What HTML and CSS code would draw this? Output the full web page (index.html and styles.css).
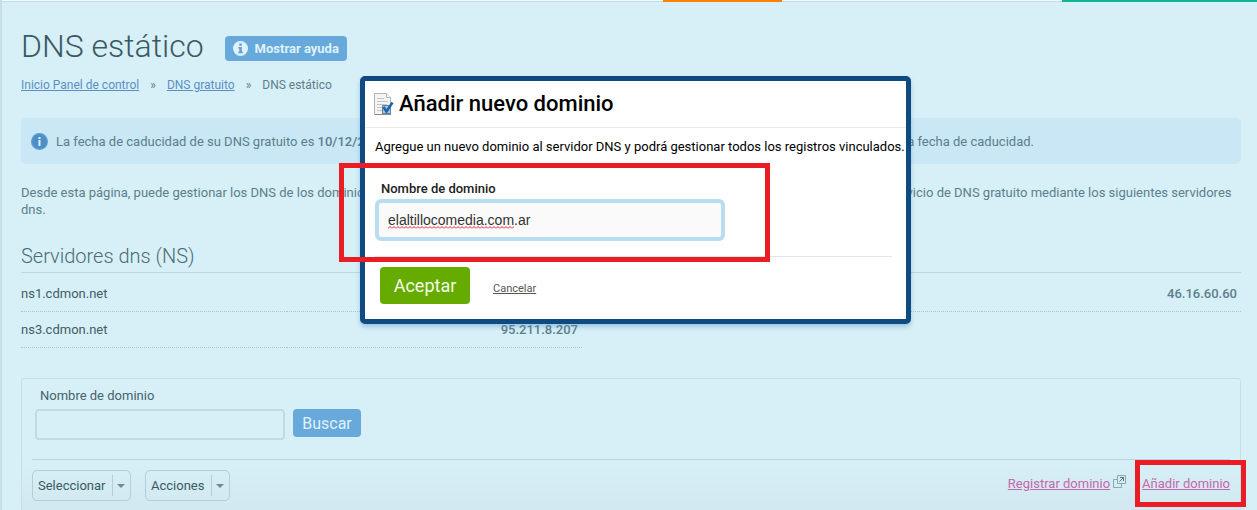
FILE: index.html
```html
<!DOCTYPE html>
<html lang="es">
<head>
    <meta charset="UTF-8">
    <meta name="viewport" content="width=device-width, initial-scale=1.0">
    <title>DNS estático</title>
    <link rel="stylesheet" href="styles.css">
</head>
<body>
    <div class="page">
        <div class="top-tabs">
            <span class="tab tab-orange"></span>
            <span class="tab tab-green"></span>
        </div>

        <div class="content">
            <div class="header">
                <h1>DNS estático</h1>
                <button type="button" class="btn btn-help">
                    <svg width="15" height="15" viewBox="0 0 15 15"><circle cx="7.5" cy="7.5" r="7.5" fill="#dff2fb"/><path d="M6.3 2.6h2.5v2.1H6.3zM5.4 6h3.4v4.8h1v1.5H5.3v-1.5h1V7.5h-.9z" fill="#5f9fd4"/></svg>
                    Mostrar ayuda
                </button>
            </div>

            <nav class="breadcrumb">
                <a href="#">Inicio Panel de control</a>
                <span>»</span>
                <a href="#">DNS gratuito</a>
                <span>»</span>
                <span>DNS estático</span>
            </nav>

            <div class="notice">
                <svg width="17" height="17" viewBox="0 0 17 17"><circle cx="8.5" cy="8.5" r="8.5" fill="#5a9bd0"/><circle cx="8.5" cy="8.5" r="7" fill="#4c8fc8"/><path d="M7.5 4h2v2h-2zM7.5 7h2v6h-2z" fill="#dff2fb"/></svg>
                <p>La fecha de caducidad de su DNS gratuito es <strong>10/12/2013</strong>. Recuerde que puede renovar el servicio de forma gratuita en este panel antes de llegar a la fecha de caducidad.</p>
            </div>

            <p class="intro">Desde esta página, puede gestionar los DNS de los dominios que tenga registrados en cualquier proveedor. Para ello, debe activar previamente todo el servicio de DNS gratuito mediante los siguientes servidores dns.</p>

            <h2>Servidores dns (NS)</h2>
            <div class="servers">
                <table>
                    <tr><td>ns1.cdmon.net</td><td class="ip">35.189.106.232</td></tr>
                    <tr><td>ns3.cdmon.net</td><td class="ip">95.211.8.207</td></tr>
                </table>
                <table>
                    <tr><td>ns2.cdmon.net</td><td class="ip">46.16.60.60</td></tr>
                </table>
            </div>

            <div class="panel">
                <form class="search">
                    <label for="search">Nombre de dominio</label>
                    <div class="search-row">
                        <input type="text" id="search">
                        <button type="button" class="btn btn-search">Buscar</button>
                    </div>
                </form>
                <div class="toolbar">
                    <div class="dropdown">
                        <select aria-label="Seleccionar"><option>Seleccionar</option></select>
                        <span class="arrow"></span>
                    </div>
                    <div class="dropdown">
                        <select aria-label="Acciones"><option>Acciones</option></select>
                        <span class="arrow"></span>
                    </div>
                    <div class="links">
                        <a href="#">Registrar dominio</a>
                        <svg width="13" height="13" viewBox="0 0 13 13" fill="none" stroke="#86a9b2"><path d="M4 4.500H.5v8h8V9"/><path d="M4.500.5h8v8h-8z"/><path d="M6.500 6.500l4-4M7 2.500h3.500V6" stroke="#55747e"/></svg>
                        <a href="#" class="add">Añadir dominio<span class="mark mark-link"></span></a>
                    </div>
                </div>
            </div>
        </div>

        <div class="modal" role="dialog" aria-labelledby="modal-title">
            <div class="modal-header">
                <svg width="20" height="23" viewBox="0 0 20 23"><path d="M.5.5h12l4 4v17H.5z" fill="#f4f4f4" stroke="#b4b4b4"/><path d="M12.500.5v4h4" fill="#fff" stroke="#b4b4b4"/><path d="M3 5.500h7M3 8.500h11M3 11.500h10M3 14.500h6M3 17.500h5" stroke="#c4c4c4"/><path d="M1 21.500h16" stroke="#888"/><path d="M8.500 12.500h8v8h-8z" fill="#9cc4e8" stroke="#5b87ad"/><path d="M9.500 14l3 4.500L18.500 9.500" fill="none" stroke="#1f64a5" stroke-width="2.500"/></svg>
                <h3 id="modal-title">Añadir nuevo dominio</h3>
            </div>
            <form class="modal-body">
                <p>Agregue un nuevo dominio al servidor DNS y podrá gestionar todos los registros vinculados.</p>
                <div class="form-group">
                    <label for="domain">Nombre de dominio</label>
                    <div class="field">
                        <input type="text" id="domain" value="elaltillocomedia.com.ar" spellcheck="false">
                        <svg class="spelling" width="126" height="3"><defs><pattern id="wave" width="4" height="3" patternUnits="userSpaceOnUse"><path d="M0 2.500L2 .5L4 2.500" fill="none" stroke="#e02030"/></pattern></defs><rect width="126" height="3" fill="url(#wave)"/></svg>
                    </div>
                </div>
                <div class="actions">
                    <button type="button" class="btn btn-accept">Aceptar</button>
                    <a href="#">Cancelar</a>
                </div>
            </form>
            <span class="mark mark-field"></span>
        </div>
    </div>
</body>
</html>
```
FILE: styles.css
```css
* { box-sizing: border-box; }
body { margin: 0; font-family: Roboto, "Liberation Sans", sans-serif; font-size: 13px; line-height: 17px; color: #5b7f8c; background: #d7eff6; }
h1, h2, h3, p { margin: 0; }
.page { position: relative; height: 100vh; overflow: hidden; border-left: 2px solid #c5e0ea; }
.top-tabs { display: flex; justify-content: flex-end; height: 2px; border-top: 1px solid #f4fbfd; background: #bfdde6; }
.tab { height: 2px; margin-top: -1px; }
.tab-orange { width: 119px; margin-right: 280px; background: #ff8000; }
.tab-green { width: 195px; background: #0fb594; }
.content { padding: 24px 16px 0 19px; }

.header { display: flex; align-items: center; gap: 21px; height: 40px; }
.header h1 { font-size: 32px; line-height: 40px; font-weight: 300; color: #3b5963; }
.btn { font-family: inherit; border: none; border-radius: 4px; cursor: pointer; }
.btn-help { display: flex; align-items: center; gap: 7px; height: 25px; margin-top: 4px; padding: 0 8px; font-size: 13px; font-weight: bold; color: #dff2fb; background: #68a9dc; }
.breadcrumb { display: flex; gap: 11px; margin-top: 11px; font-size: 12px; }
.breadcrumb a { color: #5b8fc4; }

.notice { display: flex; align-items: center; gap: 8px; height: 46px; margin-top: 24px; padding: 0 10px; border-radius: 5px; background: #cae7f6; white-space: nowrap; }
.notice strong { font-weight: 500; }
.intro { margin-top: 20px; }

h2 { margin-top: 26px; padding-bottom: 3px; border-bottom: 1px solid #bcd6df; font-size: 20px; line-height: 25px; font-weight: 300; color: #4b6c78; }
.servers { display: grid; grid-template-columns: 561px 1fr; gap: 97px; align-items: start; padding-top: 3px; }
.servers table { width: 100%; border-spacing: 0; }
.servers td { height: 36px; padding: 0 0 1px; border-bottom: 1px dotted #a9c5ce; color: #3f5d68; }
.servers .ip { padding-right: 4px; text-align: right; font-weight: 500; color: #5b7f8c; }

.panel { min-height: 160px; margin-top: 30px; padding: 8px 10px; border: 1px solid #c3dfe8; border-radius: 3px; background: linear-gradient(#d7eff6 50%, #cfe5ed); }
.search { padding: 0 3px 19px; border-bottom: 1px solid #bcd6df; }
.search label { display: block; padding-left: 5px; color: #44636e; }
.search-row { display: flex; gap: 8px; margin-top: 5px; }
.search input { width: 250px; height: 31px; border: 2px solid #c0dbe4; border-radius: 4px; background: transparent; }
.btn-search { width: 68px; height: 28px; font-size: 16px; color: #dff2fb; background: #68a9dc; }
.toolbar { display: flex; align-items: center; gap: 14px; padding-top: 10px; }
.dropdown { display: flex; align-items: center; height: 31px; padding: 0 5px; border: 1px solid #b3ced7; border-radius: 5px; }
.dropdown select { appearance: none; padding: 0; border: none; background: transparent; font-family: inherit; font-size: 13px; color: #3b5963; }
.arrow { width: 13px; height: 21px; margin-left: 6px; padding: 9px 0 0 4px; border-left: 1px solid #b3ced7; }
.arrow::after { content: ""; display: block; width: 0; border: 4px solid transparent; border-top-color: #6a8c98; border-bottom: none; }
.links { display: flex; align-items: center; gap: 3px; margin: -4px 0 0 auto; }
.links a { color: #c668ac; }
.links svg { margin-top: -5px; }
.links .add { position: relative; margin-left: 13px; }

.modal { position: absolute; top: 76px; left: 358px; width: 551px; height: 248px; border: 5px solid #0f4a80; border-radius: 5px; background: #fff; color: #000; box-shadow: 0 3px 4px rgba(70, 140, 200, 0.4); }
.modal-header { display: flex; align-items: center; gap: 5px; height: 47px; padding: 0 9px; border-bottom: 1px solid #e8ecef; }
.modal-header h3 { font-size: 22px; line-height: 28px; font-weight: 500; }
.modal-body { padding: 10px 10px 0; }
.modal-body p { white-space: nowrap; }
.form-group { margin-right: 4px; padding: 25px 0 15px; border-bottom: 1px solid #e4e4e4; }
.form-group label { display: block; padding-left: 6px; font-weight: 500; color: #222; }
.field { position: relative; width: 350px; margin-top: 2px; }
.field input { display: block; width: 100%; height: 42px; padding: 0 9px; border: 4px solid #b9ddf0; border-radius: 6px; background: #fbfafa; font-family: "Liberation Sans", Arial, sans-serif; font-size: 14px; color: #333; }
.spelling { position: absolute; left: 13px; top: 27px; }
.actions { display: flex; align-items: center; gap: 23px; margin-top: 10px; padding-left: 5px; }
.btn-accept { width: 90px; height: 37px; font-size: 18px; color: #f4fbe8; background: #66ac00; }
.actions a { margin-top: 5px; font-size: 11px; color: #555; }

/* red highlight boxes */
.mark { position: absolute; border: 5px solid #ea1c24; pointer-events: none; }
.mark-field { top: 82px; left: -26px; width: 431px; height: 99px; }
.mark-link { top: -15px; left: -7px; width: 111px; height: 47px; }
```
